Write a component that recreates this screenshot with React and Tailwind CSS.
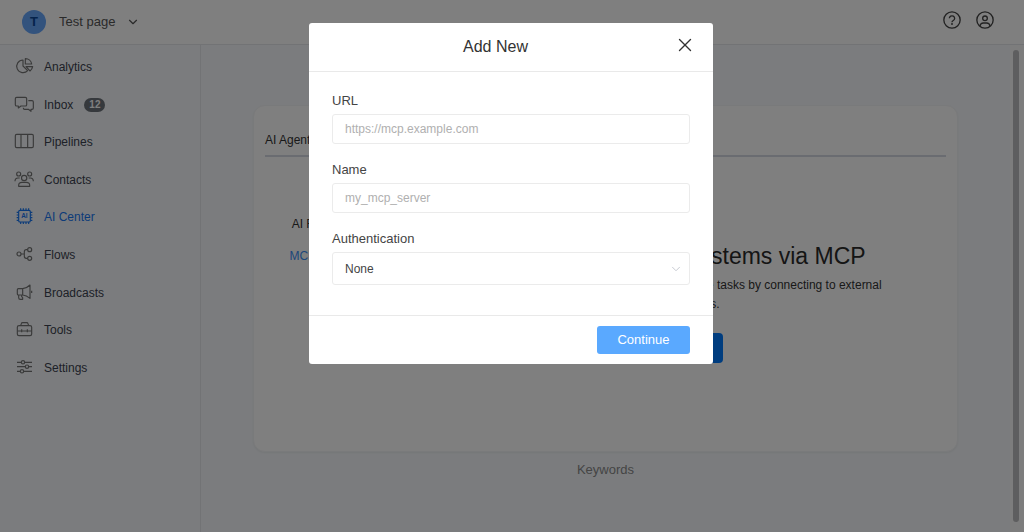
import React, { useState } from "react";
import { ChevronDown, X } from "lucide-react";

const navItems = [
  { name: "Analytics", icon: "analytics" },
  { name: "Inbox", icon: "inbox", count: 12 },
  { name: "Pipelines", icon: "pipelines" },
  { name: "Contacts", icon: "contacts" },
  { name: "AI Center", icon: "ai" },
  { name: "Flows", icon: "flows" },
  { name: "Broadcasts", icon: "broadcasts" },
  { name: "Tools", icon: "tools" },
  { name: "Settings", icon: "settings" },
];

const icons = {
  analytics: (
    <>
      <path d="M27 6A19 19 0 1 0 41 38L27 24Z" />
      <path d="M34 2V18H53A19 18 0 0 0 34 2Z" />
      <path d="M36 26H56A22 22 0 0 1 48 39Z" />
    </>
  ),
  inbox: (
    <>
      <path d="M8 4H34a4 4 0 0 1 4 4V26a4 4 0 0 1-4 4H21l-8 6V30H8a4 4 0 0 1-4-4V8a4 4 0 0 1 4-4Z" />
      <path d="M43 14H54a4 4 0 0 1 4 4V36a4 4 0 0 1-4 4H51v6l-8-6H32a4 4 0 0 1-4-4V35" />
    </>
  ),
  pipelines: (
    <>
      <rect x="4" y="4" width="54" height="40" rx="4" />
      <path d="M21 4V44M41 4V44" />
    </>
  ),
  contacts: (
    <>
      <circle cx="14" cy="9" r="6" />
      <circle cx="47" cy="9" r="6" />
      <circle cx="30.5" cy="21" r="8" />
      <path d="M14 46v-3a10 9 0 0 1 10-9H37a10 9 0 0 1 10 9v3Z" />
      <path d="M3 31c0-7 4-10 9-10h5M58 31c0-7-4-10-9-10h-5" />
    </>
  ),
  ai: (
    <>
      <rect x="14" y="7" width="35" height="35" rx="4" />
      <path d="M20 7V1M28 7V1M36 7V1M44 7V1M20 42v6M28 42v6M36 42v6M44 42v6M14 13H8M14 21H8M14 29H8M14 37H8M49 13h6M49 21h6M49 29h6M49 37h6" />
      <text x="31" y="31" fontSize="19" fontWeight="700" textAnchor="middle" fill="currentColor" stroke="none">
        AI
      </text>
    </>
  ),
  flows: (
    <>
      <circle cx="15" cy="24" r="6" />
      <circle cx="47" cy="11" r="6" />
      <circle cx="47" cy="37" r="6" />
      <path d="M21 24H31M41 11H37a6 6 0 0 0-6 6V31a6 6 0 0 0 6 6h4" />
    </>
  ),
  broadcasts: (
    <>
      <path d="M26 14H13a3 3 0 0 0-3 3V30a3 3 0 0 0 3 3H26C36 34 42 38 48 43V3C42 9 36 13 26 14ZM26 14V33" />
      <path d="M14 33v8a5 5 0 0 0 5 5h7V41l-3-3V33M53 20v7" />
    </>
  ),
  tools: (
    <>
      <rect x="10" y="14" width="43" height="30" rx="5" />
      <path d="M20 14l2-6a4 4 0 0 1 4-3H38a4 4 0 0 1 4 3l2 6M10 30H53M23 25v9M40 25v9" />
    </>
  ),
  settings: (
    <>
      <path d="M9 10H22M32 10H54M9 23H34M44 23H54M9 37H19M29 37H54" />
      <circle cx="27" cy="10" r="5" />
      <circle cx="39" cy="23" r="5" />
      <circle cx="24" cy="37" r="5" />
    </>
  ),
};

function NavIcon({ name }) {
  return (
    <svg
      viewBox="0 0 60 48"
      className="w-5 h-4 mb-0.5 shrink-0 overflow-visible"
      fill="none"
      stroke="currentColor"
      strokeWidth="3.5"
      strokeLinejoin="round"
    >
      {icons[name]}
    </svg>
  );
}

function Header() {
  return (
    <header className="flex items-center justify-between h-[45px] shrink-0 pl-[22px] pr-[30px] bg-white border-b border-gray-200">
      <button className="flex items-center text-[13px] text-[#555]">
        <span className="flex items-center justify-center w-6 h-6 mr-[13px] rounded-full bg-[#66a6fb] text-[#0b4796] font-bold">
          T
        </span>
        Test page
        <ChevronDown className="w-3.5 h-3.5 ml-[11px]" strokeWidth={2} />
      </button>
      <div className="flex items-center gap-[15px] pb-1 text-[#444]">
        <button aria-label="Help">
          <svg viewBox="0 0 54 54" className="w-[18px] h-[18px]" fill="none" stroke="currentColor" strokeWidth="4">
            <circle cx="27" cy="27" r="24.5" />
            <path d="M19 22a8 7.5 0 1 1 12 6.500c-3 2-4 3-4 5" />
            <circle cx="27" cy="39" r="1" fill="currentColor" />
          </svg>
        </button>
        <button aria-label="Account">
          <svg viewBox="0 0 54 54" className="w-[18px] h-[18px]" fill="none" stroke="currentColor" strokeWidth="4">
            <circle cx="27" cy="27" r="24.5" />
            <circle cx="27" cy="22" r="7" />
            <path d="M12 45c1-6 5-9 10-9h10c5 0 9 3 10 9" />
          </svg>
        </button>
      </div>
    </header>
  );
}

function Sidebar() {
  return (
    <aside className="w-[201px] shrink-0 pt-[3px] border-r border-gray-200">
      <nav className="grid auto-rows-fr min-h-[338px]">
        {navItems.map((item) => (
          <a
            key={item.name}
            href="#"
            className={`flex items-center pl-[14px] pt-px text-xs ${
              item.name === "AI Center" ? "text-[#1877f2]" : "text-[#3c4250]"
            }`}
          >
            <span className={`flex mr-[10px] ${item.name === "AI Center" ? "" : "text-[#757575]"}`}>
              <NavIcon name={item.icon} />
            </span>
            {item.name}
            {item.count && (
              <span className="ml-[11px] px-[5px] rounded-full bg-[#6c727a] text-white text-[10px] leading-[14px] font-bold">
                {item.count}
              </span>
            )}
          </a>
        ))}
      </nav>
    </aside>
  );
}

function AiCenter() {
  return (
    <main className="flex-1 px-[52px] pt-[60px] text-xs text-[#333]">
      <section className="px-[11px] pb-[84px] bg-white rounded-xl border border-gray-100 shadow-xs">
        <div className="pt-[26px] pb-[7px] border-b-2 border-[#d5d9e2]">
          <a href="#">AI Agents</a>
        </div>
        <div className="flex pt-[59px]">
          <div className="flex flex-col gap-4 w-[120px] shrink-0 text-center">
            <a href="#">AI Functions</a>
            <a href="#" className="text-[#3d8df5]">
              MCP Servers
            </a>
          </div>
          <div className="flex-1 pt-[25px] pr-[42px] text-center whitespace-nowrap">
            <h1 className="text-[23px] leading-[30px] text-[#2b2b2b]">Connect AI Agents to any systems via MCP</h1>
            <p className="pt-[5px] leading-[19px]">
              Let your AI Agents look up live product data and complete tasks by connecting to external
              <br />
              business tools and services.
            </p>
            <button className="w-[156px] h-[30px] mt-[19px] rounded bg-[#007bff]" aria-label="Add MCP server" />
          </div>
        </div>
      </section>
      <p className="pt-2 text-[13px] leading-5 text-center text-[#8a8a8a]">Keywords</p>
    </main>
  );
}

function AddNewModal({ onClose }) {
  const [form, setForm] = useState({ url: "", name: "", auth: "none" });

  const handleChange = (e) => {
    const { name, value } = e.target;
    setForm((prev) => ({ ...prev, [name]: value }));
  };

  return (
    <div className="fixed inset-0 flex items-start justify-center pt-[23px] pr-0.5 bg-black/50">
      <div role="dialog" aria-labelledby="modal-title" className="w-[404px] max-w-full bg-white rounded-[3px]">
        <div className="flex items-center h-[49px] pl-[11px] pr-[14px] border-b border-[#e9e9e9]">
          <h2 id="modal-title" className="flex-1 text-base text-center text-[#333]">
            Add New
          </h2>
          <button aria-label="Close" onClick={onClose} className="flex justify-center w-7 pb-1 text-[#333]">
            <X className="w-[22px] h-[22px]" strokeWidth={1.5} />
          </button>
        </div>

        <div className="flex flex-col gap-[18px] px-[23px] pt-[21px] pb-[30px] text-xs text-[#444]">
          <div>
            <label htmlFor="url" className="block mb-[5px] text-[13px] leading-4">
              URL
            </label>
            <input
              id="url"
              type="text"
              name="url"
              placeholder="https://mcp.example.com"
              value={form.url}
              onChange={handleChange}
              className="block w-full h-[30px] px-3 border border-[#ebebeb] rounded-[3px] placeholder:text-[#b0b0b0]"
            />
          </div>
          <div>
            <label htmlFor="name" className="block mb-[5px] text-[13px] leading-4">
              Name
            </label>
            <input
              id="name"
              type="text"
              name="name"
              placeholder="my_mcp_server"
              value={form.name}
              onChange={handleChange}
              className="block w-full h-[30px] px-3 border border-[#ebebeb] rounded-[3px] placeholder:text-[#b0b0b0]"
            />
          </div>
          <div>
            <label htmlFor="auth" className="block mb-[5px] text-[13px] leading-4">
              Authentication
            </label>
            <div className="relative">
              <select
                id="auth"
                name="auth"
                value={form.auth}
                onChange={handleChange}
                className="block w-full h-[33px] px-3 bg-white border border-[#ebebeb] rounded-[3px] appearance-none"
              >
                <option value="none">None</option>
                <option value="bearer">Bearer token</option>
              </select>
              <ChevronDown
                className="absolute right-[7px] top-[10px] w-[14px] h-[14px] text-[#c0c4cc] pointer-events-none"
                strokeWidth={1.5}
              />
            </div>
          </div>
        </div>

        <div className="flex justify-end px-[23px] py-[10px] border-t border-[#e9e9e9]">
          <button className="w-[93px] h-7 rounded-[3px] bg-[#5aa9ff] text-white text-[13px]">Continue</button>
        </div>
      </div>
    </div>
  );
}

function App() {
  const [isModalOpen, setIsModalOpen] = useState(true);

  return (
    <div className="flex flex-col h-screen bg-[#f6f9fc] font-['Liberation_Sans',Arial,sans-serif]">
      <Header />
      <div className="flex flex-1 min-h-0">
        <Sidebar />
        <AiCenter />
        <div className="flex w-[14px] pt-[5px] pb-[10px] pl-[3px] bg-[#fafafa]">
          <div className="w-[6px] rounded-full bg-[#bdbdbf]" />
        </div>
      </div>
      {isModalOpen && <AddNewModal onClose={() => setIsModalOpen(false)} />}
    </div>
  );
}

export default App;
